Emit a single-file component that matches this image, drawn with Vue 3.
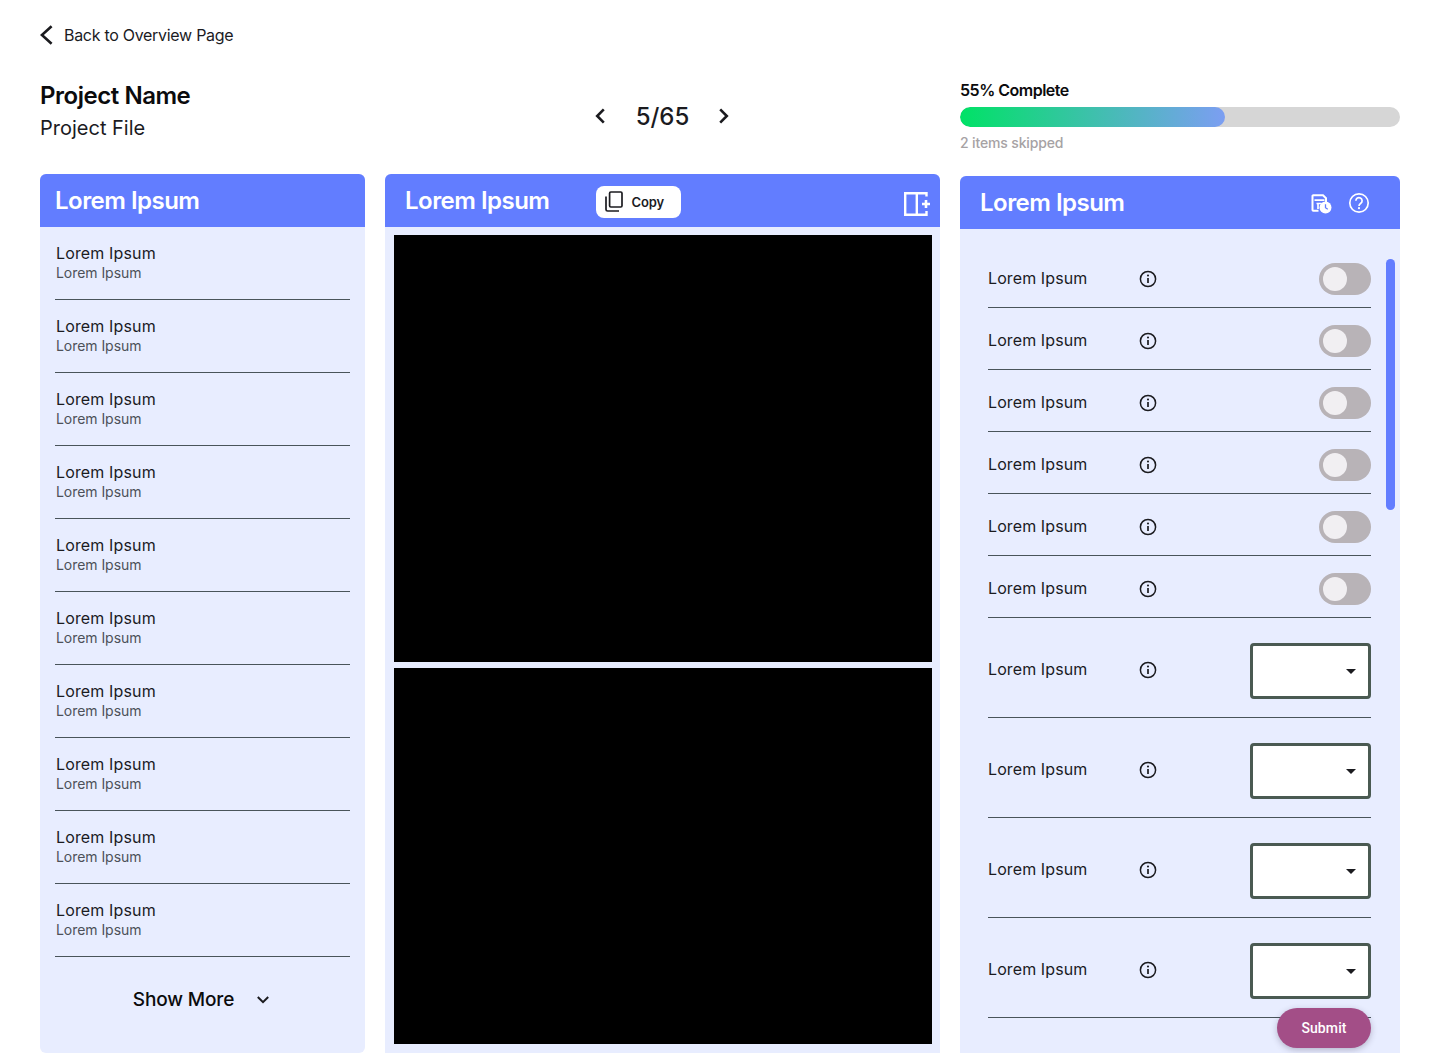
<script setup>
const listItems = Array.from({ length: 10 }, (_, i) => i)
const toggles = Array.from({ length: 6 }, (_, i) => i)
const selects = Array.from({ length: 4 }, (_, i) => i)
</script>

<template>
  <div class="page">
    <a class="back">
      <svg width="14" height="20" viewBox="0 0 14 20" class="back-icon"><path d="M11.600 1.200 1.900 10l9.700 8.800" fill="none" stroke="#1b1b1f" stroke-width="2.600"/></svg>
      <span>Back to Overview Page</span>
    </a>

    <div class="columns">
      <section class="col">
        <div class="titles">
          <div class="project">Project Name</div>
          <div class="file">Project File</div>
        </div>
        <div class="panel panel-left">
          <header class="head"><h2>Lorem Ipsum</h2></header>
          <ul class="list">
            <li v-for="i in listItems" :key="i" class="list-item">
              <div class="item-main">Lorem Ipsum</div>
              <div class="item-sub">Lorem Ipsum</div>
            </li>
          </ul>
          <div class="more">
            <span>Show More</span>
            <svg width="14" height="10" viewBox="0 0 14 10"><path d="M1.800 2 7 7.200 12.200 2" fill="none" stroke="#1b1b1f" stroke-width="2"/></svg>
          </div>
        </div>
      </section>

      <section class="col">
        <div class="pager">
          <svg width="12" height="18" viewBox="0 0 12 18"><path d="M9.800 2.400 3.200 9l6.600 6.600" fill="none" stroke="#1b1b1f" stroke-width="2.600"/></svg>
          <span class="count">5/65</span>
          <svg width="12" height="18" viewBox="0 0 12 18"><path d="M1.200 2.400 7.800 9l-6.600 6.600" fill="none" stroke="#1b1b1f" stroke-width="2.600"/></svg>
        </div>
        <div class="panel panel-mid">
          <header class="head head-mid">
            <h2>Lorem Ipsum</h2>
            <button class="copy">
              <svg width="18" height="21" viewBox="0 0 18 21"><path d="M1 5.500V18.400Q1 20 2.600 20H14" fill="none" stroke="#1b1b1f" stroke-width="1.700"/><rect x="4.600" y="1" width="12.400" height="15" rx="1.200" fill="none" stroke="#1b1b1f" stroke-width="1.700"/></svg>
              <span>Copy</span>
            </button>
            <svg class="split" width="26" height="24" viewBox="0 0 26 24">
              <path d="M22.500 4.500V1.200H1.200V22.800H22.500V19M12.800 1.200V22.800" fill="none" stroke="#fff" stroke-width="2.400"/>
              <path d="M20.700 8h2.600v2.700H26v2.600h-2.700V16h-2.600v-2.700H18v-2.600h2.700z" fill="#fff"/>
            </svg>
          </header>
          <div class="viewer">
            <div class="frame frame-a"></div>
            <div class="frame frame-b"></div>
          </div>
        </div>
      </section>

      <section class="col">
        <div class="progress-block">
          <div class="pct">55% Complete</div>
          <div class="track"><div class="fill" :style="{ width: '60.2%' }"></div></div>
          <div class="skipped">2 items skipped</div>
        </div>
        <div class="panel panel-right">
          <header class="head head-right">
            <h2>Lorem Ipsum</h2>
            <div class="head-icons">
              <svg width="21" height="22" viewBox="0 0 21 22">
                <path d="M2.300 3.200h9.700l3 3v4M7.500 18.700H2.300a.8.8 0 0 1-.8-.8V4a.8.8 0 0 1 .8-.8" fill="none" stroke="#fff" stroke-width="2"/>
                <path d="M3.500 8.200h10M5.500 11.500h5M7 11.500v5.500" fill="none" stroke="#fff" stroke-width="1.700"/>
                <circle cx="14.500" cy="15.500" r="6" fill="#fff"/>
                <path d="M14.500 12.200v3.500l2.300 1.500" fill="none" stroke="#627dff" stroke-width="1.300"/>
              </svg>
              <svg width="22" height="22" viewBox="0 0 22 22">
                <circle cx="11" cy="11" r="9.200" fill="none" stroke="#fff" stroke-width="1.700"/>
                <path d="M7.900 8.700a3.100 3.100 0 1 1 4.900 2.500c-1.100.8-1.800 1.300-1.800 2.800" fill="none" stroke="#fff" stroke-width="1.700"/>
                <circle cx="11" cy="16.200" r="1.100" fill="#fff"/>
              </svg>
            </div>
          </header>
          <div class="settings">
            <div v-for="i in toggles" :key="'t' + i" class="row row-toggle">
              <span class="row-label">Lorem Ipsum</span>
              <svg class="info" width="18" height="18" viewBox="0 0 18 18">
                <circle cx="9" cy="9" r="7.600" fill="none" stroke="#1b1b1f" stroke-width="1.500"/>
                <path d="M9 8v5" stroke="#1b1b1f" stroke-width="1.700"/>
                <circle cx="9" cy="5.500" r="1.050" fill="#1b1b1f"/>
              </svg>
              <span class="toggle"><span class="thumb"></span></span>
            </div>
            <div v-for="i in selects" :key="'s' + i" class="row row-select">
              <span class="row-label">Lorem Ipsum</span>
              <svg class="info" width="18" height="18" viewBox="0 0 18 18">
                <circle cx="9" cy="9" r="7.600" fill="none" stroke="#1b1b1f" stroke-width="1.500"/>
                <path d="M9 8v5" stroke="#1b1b1f" stroke-width="1.700"/>
                <circle cx="9" cy="5.500" r="1.050" fill="#1b1b1f"/>
              </svg>
              <span class="select"><span class="caret"></span></span>
            </div>
          </div>
          <div class="scrollbar"></div>
          <button class="submit">Submit</button>
        </div>
      </section>
    </div>
  </div>
</template>

<style>
html, body { margin: 0; background: #fff; overflow: hidden; }
</style>

<style scoped>
.page {
  box-sizing: border-box;
  width: 1440px;
  height: 1053px;
  padding: 0 40px;
  display: flex;
  flex-direction: column;
  overflow: hidden;
  font-family: Inter, "Liberation Sans", sans-serif;
  color: #1b1b1f;
  background: #fff;
}
.back {
  height: 70px;
  flex: none;
  display: flex;
  align-items: center;
  gap: 10px;
  font-size: 16px;
  line-height: 24px;
  letter-spacing: -0.29px;
}
.back-icon { flex: none; }
.columns {
  flex: 1;
  min-height: 0;
  display: grid;
  grid-template-columns: 325px 555px 440px;
  column-gap: 20px;
}
.col { display: flex; flex-direction: column; min-height: 0; }
.titles { height: 104px; flex: none; box-sizing: border-box; padding-top: 10px; }
.project { font-size: 24px; line-height: 32px; font-weight: 600; color: #0b0b0d; letter-spacing: -0.46px; }
.file { font-size: 20px; line-height: 32px; font-weight: 400; }
.panel {
  flex: 1;
  min-height: 0;
  position: relative;
  display: flex;
  flex-direction: column;
  background: #e8edff;
  border-radius: 6px 6px 0 0;
  overflow: hidden;
}
.panel-left { border-radius: 6px; }
.head {
  flex: none;
  height: 53px;
  box-sizing: border-box;
  padding: 0 15px;
  display: flex;
  align-items: center;
  background: #627dff;
  color: #fff;
}
.head h2 { margin: 0; font-size: 24px; line-height: 32px; font-weight: 600; letter-spacing: -0.52px; }
.list { list-style: none; margin: 0; padding: 0 15px; }
.list-item {
  box-sizing: border-box;
  height: 73px;
  padding: 14px 1px 0;
  border-bottom: 1px solid #49545a;
}
.item-main { font-size: 16px; line-height: 24px; letter-spacing: 0.14px; }
.item-sub { margin-top: -2px; font-size: 14px; line-height: 20px; letter-spacing: -0.05px; color: #4d5159; }
.more {
  height: 85px;
  box-sizing: border-box;
  padding-right: 2px;
  display: flex;
  align-items: center;
  justify-content: center;
  gap: 22px;
  font-size: 19px;
  font-weight: 500;
  letter-spacing: -0.15px;
  color: #0b0b0d;
}
.pager {
  height: 104px;
  flex: none;
  box-sizing: border-box;
  padding-bottom: 12px;
  display: flex;
  align-items: center;
  justify-content: center;
  gap: 30px;
}
.count { font-size: 24px; font-weight: 500; }
.head-mid { padding: 0 10px 0 20px; }
.copy {
  margin-left: 47px;
  margin-top: 2px;
  width: 85px;
  height: 32px;
  border: 0;
  border-radius: 8px;
  background: #fff;
  display: flex;
  align-items: center;
  gap: 8px;
  padding: 0 0 0 9px;
  font-family: Inter, sans-serif;
  font-size: 13px;
  font-weight: 600;
  letter-spacing: -0.1px;
  color: #1b1b1f;
}
.split { margin-left: auto; margin-top: 7px; }
.viewer { padding: 8px 8px 9px 9px; display: flex; flex-direction: column; gap: 6px; flex: 1; min-height: 0; }
.frame { background: #000; }
.frame-a { height: 427px; flex: none; }
.frame-b { flex: 1; }
.progress-block { height: 106px; flex: none; box-sizing: border-box; padding-top: 9px; }
.pct { font-size: 16px; line-height: 22px; font-weight: 600; letter-spacing: -0.5px; color: #0b0b0d; }
.track { margin-top: 6px; height: 20px; border-radius: 10px; background: #d6d6d6; overflow: hidden; }
.fill { height: 100%; border-radius: 10px; background: linear-gradient(90deg, #00e266 0%, #7c9ef2 100%); }
.skipped { margin-top: 6px; font-size: 14px; line-height: 20px; font-weight: 500; letter-spacing: -0.15px; color: #a6a2a4; }
.head-right { padding: 0 30px 0 20px; }
.head-icons { margin-left: auto; display: flex; align-items: center; gap: 16px; }
.settings { padding: 17px 29px 0 28px; }
.row { display: flex; align-items: center; border-bottom: 1px solid #49545a; box-sizing: border-box; padding-top: 4px; }
.row-toggle { height: 62px; }
.row-select { height: 100px; }
.row-label { width: 151px; flex: none; margin-bottom: 2px; font-size: 16px; line-height: 24px; letter-spacing: 0.1px; }
.info { flex: none; }
.toggle {
  margin-left: auto;
  width: 52px;
  height: 32px;
  border-radius: 16px;
  background: #b8b3b7;
  display: flex;
  align-items: center;
  padding-left: 4px;
  box-sizing: border-box;
}
.thumb { width: 24px; height: 24px; border-radius: 50%; background: #f1eff2; }
.select {
  margin-left: auto;
  margin-top: 2px;
  width: 121px;
  height: 56px;
  box-sizing: border-box;
  border: 3px solid #4a5a52;
  border-radius: 4px;
  background: #fff;
  position: relative;
}
.caret {
  position: absolute;
  right: 12px;
  top: 23px;
  border-left: 5px solid transparent;
  border-right: 5px solid transparent;
  border-top: 5px solid #1b1b1f;
}
.scrollbar {
  position: absolute;
  left: 426px;
  top: 83px;
  width: 9px;
  height: 251px;
  border-radius: 5px;
  background: #627dff;
}
.submit {
  position: absolute;
  left: 317px;
  top: 832px;
  width: 94px;
  height: 40px;
  border: 0;
  border-radius: 20px;
  background: #a34e87;
  color: #fff;
  font-family: Roboto, sans-serif;
  font-size: 14px;
  font-weight: 500;
  letter-spacing: 0.1px;
  box-shadow: 0 2px 6px rgba(60, 50, 80, 0.3);
}
</style>
